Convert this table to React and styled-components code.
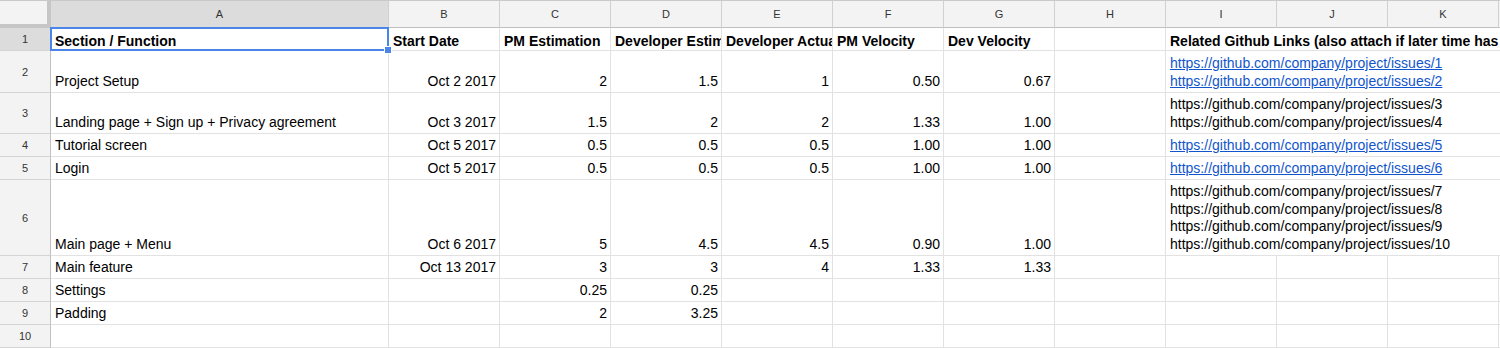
import styled, { createGlobalStyle } from "styled-components";

const GlobalStyle = createGlobalStyle`
  body {
    margin: 0;
    background: #fff;
    overflow: hidden;
    font-family: "Liberation Sans", Arial, sans-serif;
  }
`;

const COLS = ["A", "B", "C", "D", "E", "F", "G", "H", "I", "J", "K"];
const ROW_HEIGHTS = [23, 42, 41, 23, 23, 76, 23, 23, 23, 23];

const link = (n) => `https://github.com/company/project/issues/${n}`;

const rows = [
  {
    bold: true,
    cells: ["Section / Function", "Start Date", "PM Estimation", "Developer Estimation", "Developer Actual", "PM Velocity", "Dev Velocity", ""],
    links: ["Related Github Links (also attach if later time has changed)"],
    plain: true,
  },
  { cells: ["Project Setup", "Oct 2 2017", "2", "1.5", "1", "0.50", "0.67", ""], links: [link(1), link(2)] },
  { cells: ["Landing page + Sign up + Privacy agreement", "Oct 3 2017", "1.5", "2", "2", "1.33", "1.00", ""], links: [link(3), link(4)], plain: true },
  { cells: ["Tutorial screen", "Oct 5 2017", "0.5", "0.5", "0.5", "1.00", "1.00", ""], links: [link(5)] },
  { cells: ["Login", "Oct 5 2017", "0.5", "0.5", "0.5", "1.00", "1.00", ""], links: [link(6)] },
  { cells: ["Main page + Menu", "Oct 6 2017", "5", "4.5", "4.5", "0.90", "1.00", ""], links: [link(7), link(8), link(9), link(10)], plain: true },
  { cells: ["Main feature", "Oct 13 2017", "3", "3", "4", "1.33", "1.33", "", "", "", "", ""] },
  { cells: ["Settings", "", "0.25", "0.25", "", "", "", "", "", "", "", ""] },
  { cells: ["Padding", "", "2", "3.25", "", "", "", "", "", "", "", ""] },
  { cells: ["", "", "", "", "", "", "", "", "", "", "", ""] },
];

const Sheet = styled.div`
  position: relative;
  display: grid;
  grid-template-columns: 51px 338px repeat(10, 111px) 1fr;
  grid-template-rows: 28px ${ROW_HEIGHTS.map((h) => h + "px").join(" ")};
  width: 1500px;
  height: 348px;
  overflow: hidden;
`;

const Corner = styled.div`
  box-sizing: border-box;
  background: #f3f3f3;
  border-top: 1px solid #c9c9c9;
  border-right: 4px solid #c6c6c6;
  border-bottom: 4px solid #c6c6c6;
`;

const ColHead = styled.div`
  box-sizing: border-box;
  display: flex;
  align-items: center;
  justify-content: center;
  background: ${(p) => (p.active ? "#dcdcdc" : "#f3f3f3")};
  border-top: 1px solid #c9c9c9;
  border-right: 1px solid #d0d0d0;
  border-bottom: 1px solid #c0c0c0;
  color: #333;
  font-size: 11px;
`;

const RowHead = styled.div`
  box-sizing: border-box;
  display: flex;
  align-items: center;
  justify-content: center;
  background: ${(p) => (p.active ? "#dcdcdc" : "#f3f3f3")};
  border-right: 1px solid #c0c0c0;
  border-bottom: 1px solid #d4d4d4;
  color: #333;
  font-size: 11px;
`;

const Cell = styled.div`
  box-sizing: border-box;
  display: flex;
  flex-direction: column;
  justify-content: flex-end;
  grid-column: ${(p) => (p.span ? "span " + p.span : "auto")};
  padding: 0 3px ${(p) => (p.bold ? "0" : "2px")} 4px;
  border-right: 1px solid #e2e2e2;
  border-bottom: 1px solid #e2e2e2;
  overflow: hidden;
  white-space: nowrap;
  text-align: ${(p) => (p.numeric ? "right" : "left")};
  font-size: 14px;
  line-height: 17.4px;
  font-weight: ${(p) => (p.bold ? "bold" : "normal")};
  color: #000;
`;

const Line = styled.div`
  color: ${(p) => (p.link ? "#1155cc" : "#000")};
  text-decoration: ${(p) => (p.link ? "underline" : "none")};
`;

const Selection = styled.div`
  position: absolute;
  top: 27px;
  left: 50px;
  width: 339px;
  height: 24px;
  box-sizing: border-box;
  border: 2px solid #4a86e8;
  pointer-events: none;
`;

const Handle = styled.div`
  position: absolute;
  right: -5px;
  bottom: -5px;
  width: 6px;
  height: 6px;
  background: #4a86e8;
  border: 1px solid #fff;
`;

const isNumeric = (v, i) => i > 0 && v !== "" && (i === 1 ? true : !isNaN(Number(v)));

const RowFragment = ({ row, index }) => (
  <>
    <RowHead active={index === 0}>{index + 1}</RowHead>
    {row.cells.map((v, i) => (
      <Cell key={i} bold={row.bold} numeric={!row.bold && isNumeric(v, i)}>
        {v && <Line>{v}</Line>}
      </Cell>
    ))}
    {row.links && (
      <Cell span={4} bold={row.bold}>
        {row.links.map((l) => (
          <Line key={l} link={!row.plain}>{l}</Line>
        ))}
      </Cell>
    )}
  </>
);

const App = () => {
  return (
    <>
      <GlobalStyle />
      <Sheet>
        <Corner />
        {COLS.map((c) => (
          <ColHead key={c} active={c === "A"}>{c}</ColHead>
        ))}
        <ColHead />
        {rows.map((row, r) => (
          <RowFragment key={r} row={row} index={r} />
        ))}
        <Selection>
          <Handle />
        </Selection>
      </Sheet>
    </>
  );
};

export default App;
